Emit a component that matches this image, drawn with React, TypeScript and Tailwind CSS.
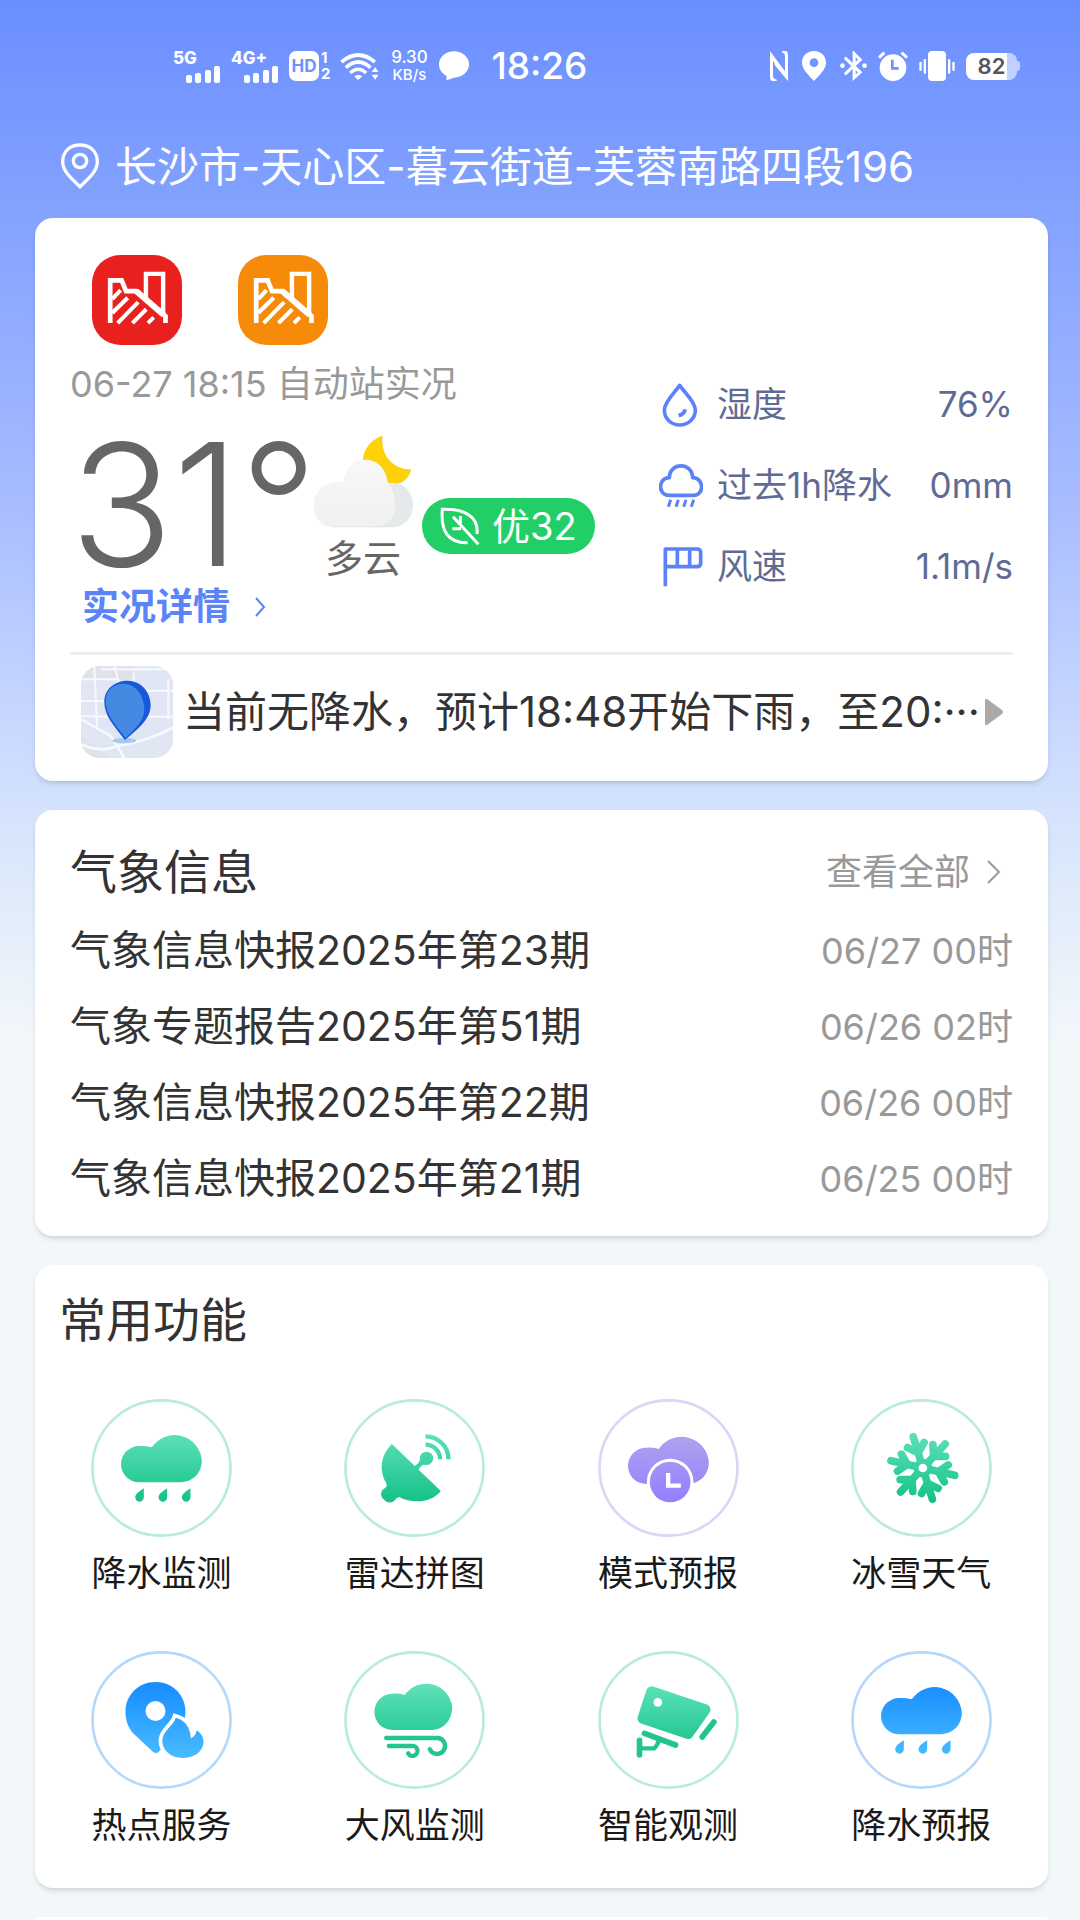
import React from "react";

type Tone = "green" | "purple" | "blue";

const GRADIENTS = {
  green: { from: "#5fe2bb", to: "#12bf86", ring: "#b9ecd9" },
  purple: { from: "#b1a3ee", to: "#937dff", ring: "#dcd5fa" },
  blue: { from: "#178cff", to: "#48bcff", ring: "#b5d8fb" },
};

const CLOUD =
  "M144 250a54.500 54.500 0 0 1 0-109q20-1 38 4A82 82 0 0 1 332 184C332 224 304 250 266 250Z";
const DROPS =
  "M158 268V295A13 13 0 1 1 134 288Q138 280 158 268ZM228 268V295A13 13 0 1 1 204 288Q208 280 228 268ZM298 268V295A13 13 0 1 1 274 288Q278 280 298 268Z";

/* status bar */
const Signal = ({ label }: { label: string }) => (
  <div className="flex flex-col w-12">
    <span className="text-[17px] leading-4 font-extrabold">{label}</span>
    <svg viewBox="0 0 36 17" className="w-9 h-[17px] self-end" fill="#fff">
      <rect x="1" y="9" width="6" height="8" rx="2" />
      <rect x="10" y="7" width="6" height="10" rx="2" />
      <rect x="20" y="4" width="6" height="13" rx="2" />
      <rect x="29" y="0" width="6" height="17" rx="2" />
    </svg>
  </div>
);

const StatusBar = () => (
  <div className="flex items-center justify-between pt-[42px] pl-[173px] pr-[60px] text-white">
    <div className="flex items-center gap-[10px] h-12">
      <Signal label="5G" />
      <Signal label="4G+" />
      <div className="flex items-center gap-[2px]">
        <div className="w-[30px] h-[30px] rounded-[7px] bg-white text-[#6f92fc] text-[17px] leading-[30px] font-bold text-center">
          HD
        </div>
        <div className="flex flex-col text-[15px] leading-4 font-bold">
          <span>1</span>
          <span>2</span>
        </div>
      </div>
      {/* wifi */}
      <svg viewBox="0 0 116 84" className="w-[39px] h-7" fill="none" stroke="#fff">
        <path d="M4 30Q54-12 104 30" strokeWidth="11" />
        <path d="M17 47Q54 13 91 47" strokeWidth="11" />
        <path d="M30 63Q54 40 78 63" strokeWidth="10" />
        <path d="M42 73Q54 65 66 73L54 84Z" fill="#fff" stroke="none" />
        <path d="M94 60L105 46L115 60ZM94 68L105 83L115 68Z" fill="#fff" stroke="none" />
      </svg>
      <div className="flex flex-col items-center w-10 text-[17px] leading-[17px] font-medium">
        <span>9.30</span>
        <span className="text-[15px]">KB/s</span>
      </div>
      <svg viewBox="0 0 90 88" className="w-[30px] h-[30px]" fill="#fff">
        <path d="M45 0C70 0 90 17 90 39S70 79 45 79Q34 82 22 87Q24 80 22 73C8 66 0 54 0 39C0 17 20 0 45 0Z" />
      </svg>
      <span className="pl-3 text-[37px] leading-10 font-medium">18:26</span>
    </div>

    <div className="flex items-center gap-[11px]">
      <svg viewBox="0 0 54 90" className="w-[18px] h-[30px]" fill="#fff">
        <path d="M0 0L38 52V66L9 30V76Q10 84 20 86V90H6Q0 88 0 78Z" />
        <path d="M54 90L14 42V28L45 60V14Q44 6 36 4V0H48Q54 2 54 12Z" />
      </svg>
      <svg viewBox="0 0 72 90" className="w-6 h-[30px] mx-[3px]" fill="#fff">
        <path
          fillRule="evenodd"
          d="M36 0C57 0 72 15 72 35C72 56 50 74 36 90C22 74 0 56 0 35C0 15 15 0 36 0ZM36 22A13 13 0 1 0 36 48A13 13 0 1 0 36 22Z"
        />
      </svg>
      <svg viewBox="0 0 80 90" className="w-[27px] h-[30px]" fill="none" stroke="#fff" strokeWidth="9">
        <path d="M14 20L60 64L42 80V8L60 26L14 70" />
        <circle cx="7" cy="44" r="7" fill="#fff" stroke="none" />
        <circle cx="73" cy="44" r="7" fill="#fff" stroke="none" />
      </svg>
      <svg viewBox="0 0 90 90" className="w-[30px] h-[30px]" fill="none" stroke="#fff" strokeWidth="9">
        <circle cx="45" cy="50" r="40" fill="#fff" stroke="none" />
        <path d="M3 20L19 5M87 20L71 5" />
        <path d="M43 26V52H62" stroke="#6f92fc" strokeWidth="8" />
      </svg>
      <svg viewBox="0 0 108 90" className="w-9 h-[30px]" fill="#fff">
        <rect x="27" y="0" width="54" height="90" rx="12" />
        <rect x="14" y="24" width="7" height="44" rx="3" />
        <rect x="1" y="32" width="7" height="28" rx="3" />
        <rect x="87" y="24" width="7" height="44" rx="3" />
        <rect x="100" y="32" width="7" height="28" rx="3" />
      </svg>
      <div className="flex items-center">
        <div className="w-[51px] h-[27px] rounded-[8px] bg-linear-to-r from-white from-80% to-[#c0d0ff] to-80% text-[#55565e] text-[22px] leading-[27px] font-semibold text-center">
          82
        </div>
        <div className="w-[3px] h-[10px] rounded-r bg-[#c0d0ff]" />
      </div>
    </div>
  </div>
);

/* landslide warning sign */
const WarningIcon = ({ color }: { color: string }) => (
  <svg viewBox="0 0 267 267" className="w-[90px] h-[90px]" fill="none" stroke="#fff" strokeWidth="12">
    <rect width="267" height="267" rx="84" fill={color} stroke="none" />
    <path d="M54 202V75H88L101 107H131L218 181V202" strokeWidth="14" />
    <path d="M160 128V56H211V172" strokeWidth="13" />
    <path d="M131 107L213 178" strokeWidth="18" />
    <path d="M60 131L85 104M60 172L106 127M76 202L137 140M120 202L161 161M166 202L183 185" />
  </svg>
);

const CloudMoon = () => (
  <svg viewBox="732 105 295 285" className="w-[102px] h-[98px]">
    <defs>
      <linearGradient id="cloudMoon" x1="0" y1="0" x2="0" y2="1">
        <stop offset="0" stopColor="#f8f8fa" />
        <stop offset="1" stopColor="#f1f1f1" />
      </linearGradient>
    </defs>
    <g className="drop-shadow-sm">
      <path d="M936 110C890 126 874 165 880 205L960 252C988 252 1014 236 1019 208C960 208 930 160 936 110Z" fill="#ffd10a" />
      <path d="M940 252C985 235 1024 265 1024 310C1024 348 998 374 964 374H880Z" fill="#e4eaeb" />
      <path
        d="M798 374C762 374 737 348 737 310C737 268 775 240 824 245C826 208 852 180 888 180C922 180 947 208 951 244C972 270 976 310 972 330C966 358 944 374 920 374Z"
        fill="url(#cloudMoon)"
      />
    </g>
  </svg>
);

const HumidityIcon = () => (
  <svg viewBox="88 40 132 132" className="w-11 h-11" fill="none" stroke="#5b82f8" strokeWidth="11">
    <path d="M150 47C138 66 104 96 104 121C104 147 125 166 150 166S197 147 197 121C197 96 162 66 150 47Z" strokeLinejoin="round" />
    <path d="M166 119Q165 132 147 138" strokeWidth="12" />
  </svg>
);

const RainIcon = () => (
  <svg viewBox="88 284 132 132" className="w-11 h-11" fill="none" stroke="#5b82f8" strokeWidth="11">
    <path d="M118 378C84 378 84 326 119 325C120 278 188 278 189 325C224 326 224 378 192 378Z" strokeLinejoin="round" />
    <path d="M123 391L116 412M146 391L139 412M169 391L162 412M192 391L185 412" strokeWidth="9" />
  </svg>
);

const WindIcon = () => (
  <svg viewBox="88 524 132 132" className="w-11 h-11" fill="none" stroke="#5b82f8" strokeWidth="11">
    <path d="M107 648V536H202Q213 536 213 547V578Q213 589 202 589H107M143 536V589M180 536V589" strokeLinejoin="round" />
  </svg>
);

const metrics = [
  { name: "湿度", value: "76%", icon: <HumidityIcon /> },
  { name: "过去1h降水", value: "0mm", icon: <RainIcon /> },
  { name: "风速", value: "1.1m/s", icon: <WindIcon /> },
];

const MapTile = () => (
  <svg viewBox="0 0 276 276" className="w-[92px] h-[92px] shrink-0">
    <defs>
      <clipPath id="tile">
        <rect width="276" height="276" rx="56" />
      </clipPath>
    </defs>
    <g clipPath="url(#tile)">
      <rect width="276" height="276" fill="#e0e6f4" />
      <path d="M0 0H150V40H0ZM0 210L90 276H0Z" fill="#dfe2e8" />
      <g fill="none" stroke="#f7f9fe" strokeWidth="6">
        <path d="M0 40H110M0 105H70M0 150L80 152M190 74H276M200 152H276M60 10H276" />
        <path d="M40 0L48 180M100 0L116 60M158 20V60M262 40V160" />
        <path d="M0 160L90 210L130 276M0 235Q60 262 110 240Q200 225 276 185" strokeWidth="8" />
      </g>
      <ellipse cx="130" cy="224" rx="36" ry="8" fill="#a9c8f0" />
      <path d="M132 222C100 180 70 150 70 108C70 66 105 44 140 44C180 44 209 78 209 118C209 160 170 190 132 222Z" fill="#1759da" />
      <path d="M134 216C104 178 74 146 74 106C74 72 100 53 126 53C166 53 190 92 190 130C190 165 160 190 134 216Z" fill="#448ae2" />
    </g>
  </svg>
);

const WeatherCard = () => (
  <section className="bg-white rounded-[18px] shadow-md pt-[37px] px-[35px] pb-[23px]">
    <div className="flex gap-14 pl-[22px]">
      <WarningIcon color="#e8211f" />
      <WarningIcon color="#f68b09" />
    </div>

    <div className="flex justify-between pt-[15px]">
      <div>
        <p className="text-[36px] leading-[48px] text-[#999]">06-27 18:15 自动站实况</p>
        <div className="flex items-start h-[175px] text-[#666]">
          <p className="w-[242px] pt-4 text-[170px] leading-[160px] font-light">31°</p>
          <div className="flex flex-col items-center pt-[26px]">
            <CloudMoon />
            <p className="pt-[2px] text-[38px] leading-[48px]">多云</p>
          </div>
          <div className="flex items-center gap-3 h-14 mt-[90px] ml-2 px-[18px] rounded-full bg-[#22cf67] text-white text-[38px]">
            <svg viewBox="1085 318 120 120" className="w-10 h-10" fill="none" stroke="#fff" strokeWidth="9">
              <path d="M1196 402C1202 350 1160 326 1092 328C1086 396 1112 430 1168 428" />
              <path d="M1200 433L1124 350M1146 374V348M1148 386H1122" />
            </svg>
            <span>优32</span>
          </div>
        </div>
        <a href="#live" className="flex items-center gap-6 h-12 pl-3 text-[37px] font-bold text-[#5a84f8]">
          实况详情
          <svg viewBox="0 0 12 20" className="w-3 h-5" fill="none" stroke="currentColor" strokeWidth="2">
            <path d="M2 1L10 10L2 19" />
          </svg>
        </a>
      </div>

      <ul className="w-[354px] pt-1 text-[35px] text-[#5f6b94]">
        {metrics.map((item) => (
          <li key={item.name} className="flex items-center h-[81px]">
            {item.icon}
            <span className="pl-[14px]">{item.name}</span>
            <span className="ml-auto">{item.value}</span>
          </li>
        ))}
      </ul>
    </div>

    <a href="#rain" className="flex items-center mt-[21px] pt-[11px] pl-[11px] pr-[10px] border-t-3 border-[#eee] text-[#333]">
      <MapTile />
      <p className="pl-[10px] flex-1 text-[42px] leading-[60px] whitespace-nowrap">
        当前无降水，预计18:48开始下雨，至20:···
      </p>
      <svg viewBox="0 0 18 28" className="w-[18px] h-7 shrink-0" fill="#aaa">
        <path d="M0 2Q0 0 2 1L17 12Q19 14 17 16L2 27Q0 28 0 26Z" />
      </svg>
    </a>
  </section>
);

const reports = [
  { title: "气象信息快报2025年第23期", time: "06/27 00时" },
  { title: "气象专题报告2025年第51期", time: "06/26 02时" },
  { title: "气象信息快报2025年第22期", time: "06/26 00时" },
  { title: "气象信息快报2025年第21期", time: "06/25 00时" },
];

const ReportCard = () => (
  <section className="bg-white rounded-[18px] shadow-md px-[35px] pt-[21px] pb-[19px]">
    <div className="flex items-center justify-between h-[82px]">
      <h2 className="text-[47px] text-[#333]">气象信息</h2>
      <a href="#all" className="flex items-center gap-[17px] pr-3 text-[36px] text-[#999]">
        查看全部
        <svg viewBox="0 0 14 24" className="w-[14px] h-6" fill="none" stroke="currentColor" strokeWidth="2">
          <path d="M1 1L12 12L1 23" />
        </svg>
      </a>
    </div>
    <ul>
      {reports.map((item) => (
        <li key={item.title}>
          <a href="#report" className="flex items-center justify-between h-[76px]">
            <span className="text-[41px] text-[#333]">{item.title}</span>
            <span className="text-[36px] text-[#999]">{item.time}</span>
          </a>
        </li>
      ))}
    </ul>
  </section>
);

/* round feature icon, fill comes from the tone's gradient */
const FeatureIcon = ({ id, tone, children }: { id: string; tone: Tone; children: React.ReactNode }) => (
  <svg viewBox="0 0 422 414" className="w-[141px] h-[138px]">
    <defs>
      <linearGradient id={id} gradientUnits="userSpaceOnUse" x1="0" y1="95" x2="0" y2="320">
        <stop offset="0" stopColor={GRADIENTS[tone].from} />
        <stop offset="1" stopColor={GRADIENTS[tone].to} />
      </linearGradient>
    </defs>
    <ellipse cx="211" cy="207" rx="207" ry="203" fill="none" stroke={GRADIENTS[tone].ring} strokeWidth="8" />
    <g fill={`url(#${id})`}>{children}</g>
  </svg>
);

const SNOW_ANGLES = [-17, 43, 103, 163, 223, 283];

const features = [
  {
    name: "降水监测",
    icon: (
      <FeatureIcon id="f1" tone="green">
        <path d={CLOUD} />
        <path d={DROPS} />
      </FeatureIcon>
    ),
  },
  {
    name: "雷达拼图",
    icon: (
      <FeatureIcon id="f2" tone="green">
        <path d="M143 135L290 276C262 312 205 315 165 294Q156 296 152 304C142 314 128 312 120 302C108 294 108 278 118 270Q130 264 127 254C104 215 108 170 143 135Z" />
        <circle cx="247" cy="178" r="20" />
        <path d="M210 202Q224 195 226 183L242 196Q228 200 223 214Z" />
        <g fill="none" stroke="url(#f2)" strokeWidth="13">
          <path d="M244 112A69 69 0 0 1 313 181M244 137A44 44 0 0 1 288 181" />
        </g>
      </FeatureIcon>
    ),
  },
  {
    name: "模式预报",
    icon: (
      <FeatureIcon id="f3" tone="purple">
        <path d={CLOUD} transform="translate(0 5)" />
        <circle cx="216" cy="249" r="70" fill="#fff" />
        <circle cx="216" cy="249" r="61" />
        <path d="M210 222V260H248" fill="none" stroke="#fff" strokeWidth="13" />
      </FeatureIcon>
    ),
  },
  {
    name: "冰雪天气",
    icon: (
      <FeatureIcon id="f4" tone="green">
        <mask id="snow" maskUnits="userSpaceOnUse" x="0" y="0" width="422" height="414">
          <g transform="translate(215 207)" stroke="#fff" strokeWidth="23" strokeLinecap="round">
            {SNOW_ANGLES.map((angle) => (
              <path key={angle} d="M0-20V-98M0-48L-26-72M0-48L26-72" fill="none" transform={`rotate(${angle})`} />
            ))}
            <circle r="28" fill="#fff" stroke="none" />
            <circle r="13" fill="#000" stroke="none" />
          </g>
        </mask>
        <rect x="90" y="80" width="250" height="250" mask="url(#snow)" />
      </FeatureIcon>
    ),
  },
  {
    name: "热点服务",
    icon: (
      <FeatureIcon id="f5" tone="blue">
        <path
          fillRule="evenodd"
          d="M193 93C244 93 283 132 283 182C283 240 225 280 202 303Q194 310 186 303L125 246C110 228 103 206 103 182C103 132 142 93 193 93ZM193 150A30 30 0 1 0 193 210A30 30 0 1 0 193 150Z"
        />
        <path
          className="[paint-order:stroke]"
          stroke="#fff"
          strokeWidth="22"
          d="M254 200C276 206 298 224 299 262C310 256 315 250 316 238C332 248 338 262 337 275C334 305 305 321 275 321C240 321 213 300 213 268C215 238 246 226 254 200Z"
        />
      </FeatureIcon>
    ),
  },
  {
    name: "大风监测",
    icon: (
      <FeatureIcon id="f6" tone="green">
        <path d="M145 237a51 51 0 0 1 0-109q20-1 37 4A78 78 0 0 1 324 168C324 210 296 237 260 237Z" />
        <g fill="none" stroke="#22c58d" strokeWidth="13" strokeLinecap="round">
          <path d="M126 261H281A24 24 0 1 1 257 295M134 285H202A15 15 0 1 1 192 307" />
        </g>
      </FeatureIcon>
    ),
  },
  {
    name: "智能观测",
    icon: (
      <FeatureIcon id="f7" tone="green">
        <path d="M160 122L321 176L270 248L134 202Z" stroke="url(#f7)" strokeWidth="32" strokeLinejoin="round" />
        <circle cx="179" cy="154" r="13" fill="#fff" />
        <g fill="none" stroke="#22c58d" strokeWidth="17" strokeLinecap="round">
          <path d="M347 213L312 258M139 247L232 282M124 268V311" />
          <path d="M128 292H168Q178 284 182 268" strokeWidth="13" />
        </g>
      </FeatureIcon>
    ),
  },
  {
    name: "降水预报",
    icon: (
      <FeatureIcon id="f8" tone="blue">
        <path d={CLOUD} />
        <path d={DROPS} />
      </FeatureIcon>
    ),
  },
];

const FeatureCard = () => (
  <section className="bg-white rounded-[18px] shadow-md pt-5 pb-[39px]">
    <h2 className="px-6 text-[47px] leading-[70px] text-[#333]">常用功能</h2>
    <div className="grid grid-cols-4 gap-y-[54px] pt-11">
      {features.map((item) => (
        <button key={item.name} type="button" className="flex flex-col items-center gap-3 text-[35px] leading-[48px] text-[#1a1a1a]">
          {item.icon}
          {item.name}
        </button>
      ))}
    </div>
  </section>
);

const App = () => {
  return (
    <div className="min-h-screen flex flex-col bg-[#f2f7fa] bg-linear-[180deg,#6a8eff_0px,#82a2ff_200px,#a8bcff_500px,#d0dffe_780px,#e2edfb_910px,#f2f7fa_1040px] font-['Inter','Noto_Sans_CJK_SC',sans-serif]">
      <StatusBar />

      {/* location */}
      <header className="flex items-center gap-4 h-[66px] mt-[43px] px-[61px] text-white">
        <svg viewBox="0 0 114 138" className="w-[38px] h-[46px] shrink-0" fill="none" stroke="#fff" strokeWidth="10">
          <path d="M57 6C88 6 109 26 109 56C109 84 84 106 57 131C30 106 5 84 5 56C5 26 26 6 57 6Z" />
          <circle cx="57" cy="54" r="20" />
        </svg>
        <h1 className="text-[42px] whitespace-nowrap">长沙市-天心区-暮云街道-芙蓉南路四段196</h1>
      </header>

      <main className="flex-1 flex flex-col gap-[29px] mt-[19px] pl-[35px] pr-8">
        <WeatherCard />
        <ReportCard />
        <FeatureCard />
        <section className="flex-1 rounded-t-[18px] bg-white" />
      </main>
    </div>
  );
};

export default App;
